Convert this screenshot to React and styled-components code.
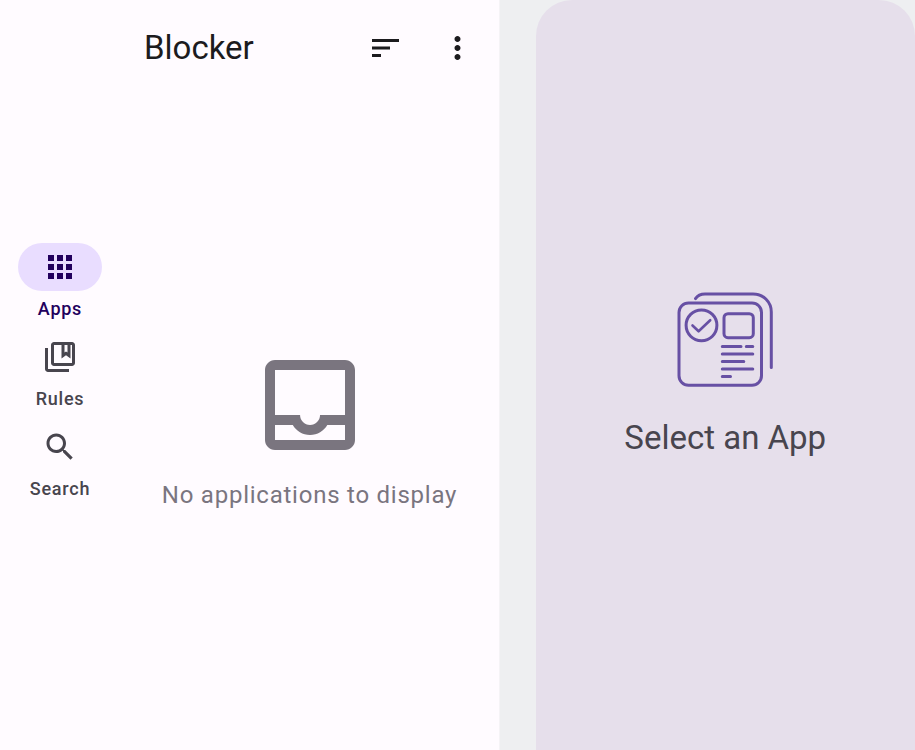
import React from "react";
import styled, { createGlobalStyle } from "styled-components";

const Global = createGlobalStyle`
  * { box-sizing: border-box; }
  body { margin: 0; overflow: hidden; font-family: Roboto, sans-serif; background: #eeeff1; }
  svg { display: block; fill: currentColor; }
`;
const Screen = styled.div`
  display: flex;
  width: 915px;
  height: 750px;
  background: #eeeff1;
`;
const ListPane = styled.div`
  display: flex;
  width: 500px;
  background: #fffbff;
  border-right: 1px solid #f5f3f6;
`;
const Rail = styled.nav`
  flex: 0 0 120px;
  display: flex;
  flex-direction: column;
  align-items: center;
  padding-top: 243px;
`;
const RailItem = styled.div`
  height: 90px;
  display: flex;
  flex-direction: column;
  align-items: center;
  color: ${(p) => (p.$active ? "#22005d" : "#48454e")};
`;
const Pill = styled.div`
  width: 84px;
  height: 48px;
  border-radius: 24px;
  display: flex;
  align-items: center;
  justify-content: center;
  background: ${(p) => (p.$active ? "#e9ddff" : "transparent")};
`;
const RailLabel = styled.span`
  margin-top: 6px;
  font-size: 18px;
  font-weight: 500;
  line-height: 24px;
  letter-spacing: 0.75px;
`;
const Content = styled.main`
  flex: 1;
  display: flex;
  flex-direction: column;
`;
const TopBar = styled.header`
  height: 96px;
  display: flex;
  align-items: center;
  padding: 0 24px;
  color: #1c1b1e;
`;
const Title = styled.h1`
  flex: 1;
  margin: 0;
  font-size: 33px;
  font-weight: 400;
  line-height: 42px;
`;
const Actions = styled.div`
  display: flex;
  gap: 36px;
`;
const Empty = styled.div`
  display: flex;
  flex-direction: column;
  align-items: center;
  padding-top: 249px;
  color: #7a757f;
`;
const EmptyText = styled.span`
  margin-top: 12px;
  font-size: 24px;
  line-height: 36px;
  letter-spacing: 0.76px;
  white-space: nowrap;
`;
const Detail = styled.section`
  width: 379.5px;
  margin-left: 35.5px;
  display: flex;
  flex-direction: column;
  align-items: center;
  padding-top: 290px;
  border-radius: 36px 36px 0 0;
  background: #e6dfeb;
  color: #48454e;
`;
const DetailText = styled.span`
  margin-top: 27px;
  font-size: 33px;
  line-height: 42px;
`;

const Icon = ({ d, size = 36, left = 0 }) => (
  <svg width={size} height={size} viewBox={`${left} 0 24 24`}><path d={d} /></svg>
);

const APPS = "M4 8h4V4H4v4zm6 12h4v-4h-4v4zm-6 0h4v-4H4v4zm0-6h4v-4H4v4zm6 0h4v-4h-4v4zm6-10v4h4V4h-4zm-6 4h4V4h-4v4zm6 6h4v-4h-4v4zm0 6h4v-4h-4v4z";
const RULES = "M4 6H2v14c0 1.1.9 2 2 2h14v-2H4V6zm16-4H8c-1.1 0-2 .9-2 2v12c0 1.1.9 2 2 2h12c1.1 0 2-.9 2-2V4c0-1.1-.9-2-2-2zm-5 2h2v5l-1-.75L15 9V4zm5 12H8V4h5v9l3-2.25L19 13V4h1v12z";
const SEARCH = "M15.5 14h-.79l-.28-.27C15.41 12.59 16 11.11 16 9.5 16 5.91 13.09 3 9.5 3S3 5.91 3 9.5 5.91 16 9.5 16c1.61 0 3.09-.59 4.23-1.57l.27.28v.79l5 4.99L20.49 19l-4.99-5zm-6 0C7.01 14 5 11.99 5 9.5S7.01 5 9.5 5 14 7.01 14 9.5 11.99 14 9.5 14z";
const SORT = "M3 18h6v-2H3v2zM3 6v2h18V6H3zm0 7h12v-2H3v2z";
const MORE = "M12 8c1.1 0 2-.9 2-2s-.9-2-2-2-2 .9-2 2 .9 2 2 2zm0 2c-1.1 0-2 .9-2 2s.9 2 2 2 2-.9 2-2-.9-2-2-2zm0 6c-1.1 0-2 .9-2 2s.9 2 2 2 2-.9 2-2-.9-2-2-2z";
const INBOX = "M19 3H5c-1.1 0-2 .9-2 2v14c0 1.1.9 2 2 2h14c1.1 0 2-.9 2-2V5c0-1.1-.9-2-2-2zm0 16H5v-3h3.56c.69 1.19 1.97 2 3.45 2s2.75-.81 3.45-2H19v3zm0-5h-4.99c0 1.1-.9 2-2 2s-2-.9-2-2H5V5h14v9z";

const AppDetailIcon = () => (
  <svg width="100" height="100" viewBox="0 0 100 100">
    <g fill="none" stroke="#6750a4" strokeWidth="3" strokeLinecap="round" strokeLinejoin="round">
      <rect x="4" y="13" width="82.5" height="82.3" rx="9.5" />
      <path d="M20.5 8.6C22.5 5.6 26 4 30 4H78C88.5 4 96.3 12 96.3 22V77.4" />
      <circle cx="26.5" cy="35.3" r="15.4" />
      <path d="M17.5 35.5L23.6 41.3L35.2 30.2" strokeWidth="2.6" />
      <rect x="49" y="23.7" width="29.3" height="24" rx="4" />
      <path d="M47.3 56.5H66M71.3 56.5H77.8M47.3 64H77.8M47.3 71.5H68.8M47.3 79H77.8M47.3 86.5H55.5" />
    </g>
  </svg>
);

const TABS = [
  { label: "Apps", d: APPS, active: true },
  { label: "Rules", d: RULES },
  { label: "Search", d: SEARCH },
];

export default function App() {
  return (
    <>
      <Global />
      <Screen>
        <ListPane>
          <Rail>
            {TABS.map((t) => (
              <RailItem key={t.label} $active={t.active}>
                <Pill $active={t.active}><Icon d={t.d} /></Pill>
                <RailLabel>{t.label}</RailLabel>
              </RailItem>
            ))}
          </Rail>
          <Content>
            <TopBar>
              <Title>Blocker</Title>
              <Actions>
                <Icon d={SORT} left={-1 / 3} />
                <Icon d={MORE} left={-1 / 3} />
              </Actions>
            </TopBar>
            <Empty>
              <Icon d={INBOX} size={120} />
              <EmptyText>No applications to display</EmptyText>
            </Empty>
          </Content>
        </ListPane>
        <Detail>
          <AppDetailIcon />
          <DetailText>Select an App</DetailText>
        </Detail>
      </Screen>
    </>
  );
}
